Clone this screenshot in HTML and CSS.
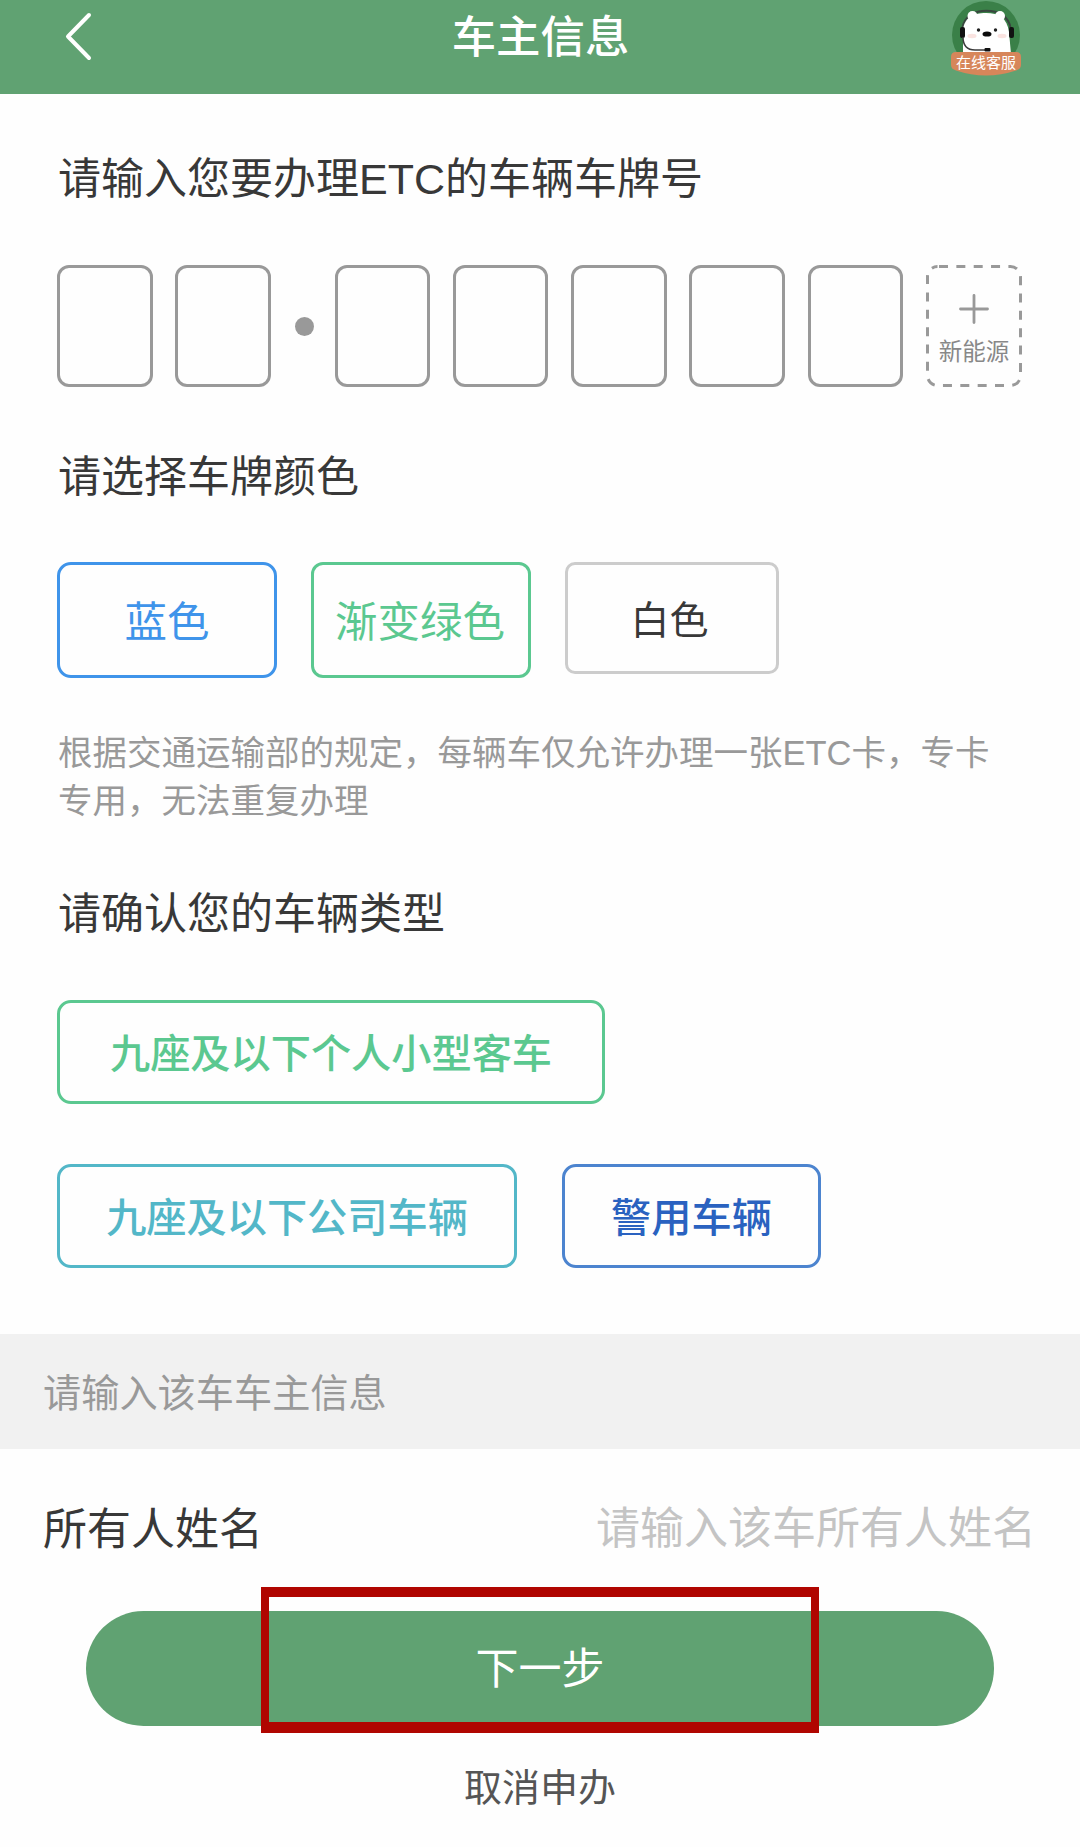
FILE: index.html
```html
<!DOCTYPE html>
<html lang="zh-CN">
<head>
  <meta charset="UTF-8">
  <meta name="viewport" content="width=device-width, initial-scale=1.0">
  <title>车主信息</title>
  <link rel="stylesheet" href="styles.css">
</head>
<body>
  <header class="header">
    <svg class="back" viewBox="0 0 32 52" width="32" height="52">
      <path d="M27 5 L6 26.500 L27 48" fill="none" stroke="#fff" stroke-width="4" stroke-linecap="round" stroke-linejoin="round"/>
    </svg>
    <h1 class="title">车主信息</h1>
    <div class="service">
      <svg class="bear" viewBox="0 0 70 76" width="70" height="76">
        <circle cx="35" cy="35" r="34" fill="#3a8048"/>
        <path d="M11.500 28 C14 5 57 5 59.500 28" fill="none" stroke="#39463f" stroke-width="2"/>
        <circle cx="21.500" cy="16" r="5" fill="#fff"/>
        <circle cx="49" cy="16" r="5" fill="#fff"/>
        <path d="M12 54 V32 C12 18 22 13 35 13 C48 13 56 18 58 32 L60 54 Z" fill="#fff"/>
        <rect x="9" y="27" width="5" height="11" rx="2" fill="#111"/>
        <rect x="58" y="27" width="5" height="11" rx="2" fill="#111"/>
        <path d="M12 37 C12 46 17 50 24 50 H36" fill="none" stroke="#3c3c3c" stroke-width="1.500"/>
        <rect x="33.500" y="48" width="6" height="3.500" rx="1" fill="#111"/>
        <circle cx="27.500" cy="30" r="1.700" fill="#222"/>
        <circle cx="44.500" cy="30" r="1.700" fill="#222"/>
        <ellipse cx="36" cy="34" rx="4.500" ry="2.600" fill="#0c0c0c"/>
        <ellipse cx="21" cy="36" rx="4.500" ry="2.200" fill="#fae3e0"/>
        <ellipse cx="51" cy="36" rx="4.500" ry="2.200" fill="#fae3e0"/>
        <path d="M5 52 H65 Q70 52 70 57 V65 Q70 69 65 70.500 Q35 80.500 5 70.500 Q0 69 0 65 V57 Q0 52 5 52 Z" fill="#d7865a"/>
      </svg>
      <span class="service-text">在线客服</span>
    </div>
  </header>

  <main class="form">
    <h2>请输入您要办理ETC的车辆车牌号</h2>
    <div class="plate">
      <span class="cell"></span>
      <span class="cell"></span>
      <span class="dot"></span>
      <span class="cell"></span>
      <span class="cell"></span>
      <span class="cell"></span>
      <span class="cell"></span>
      <span class="cell"></span>
      <span class="new-energy">
        <svg class="dash" viewBox="0 0 96 122" width="96" height="122">
          <rect x="1.500" y="1.500" width="93" height="119" rx="10" fill="none" stroke="#999" stroke-width="3" stroke-dasharray="9 8.350" stroke-dashoffset="-1.500"/>
        </svg>
        <svg class="plus" viewBox="0 0 30 30" width="30" height="30">
          <path d="M15 1.500 V28.500 M1.500 15 H28.500" stroke="#999" stroke-width="2.800" stroke-linecap="round"/>
        </svg>
        <span>新能源</span>
      </span>
    </div>

    <h2>请选择车牌颜色</h2>
    <div class="colors">
      <button class="color blue">蓝色</button>
      <button class="color green">渐变绿色</button>
      <button class="color white">白色</button>
    </div>
    <p class="note">根据交通运输部的规定，每辆车仅允许办理一张ETC卡，专卡<br>专用，无法重复办理</p>

    <h2>请确认您的车辆类型</h2>
    <div class="types">
      <button class="type personal">九座及以下个人小型客车</button>
      <button class="type company">九座及以下公司车辆</button>
      <button class="type police">警用车辆</button>
    </div>
  </main>

  <div class="band">请输入该车车主信息</div>

  <div class="owner">
    <label class="owner-label" for="owner">所有人姓名</label>
    <input class="owner-input" id="owner" type="text" placeholder="请输入该车所有人姓名">
  </div>

  <div class="actions">
    <button class="next">下一步</button>
    <span class="highlight"></span>
    <a class="cancel">取消申办</a>
  </div>
</body>
</html>
```
FILE: styles.css
```css
* {
  box-sizing: border-box;
}
body {
  margin: 0;
  width: 1080px;
  height: 1847px;
  overflow: hidden;
  background: #fefefe;
  color: #383838;
  font-family: "Liberation Sans", "Noto Sans CJK SC", sans-serif;
}
button,
input {
  font-family: inherit;
  padding: 0;
  background: none;
  border: none;
}
.header {
  display: flex;
  justify-content: space-between;
  align-items: flex-start;
  height: 94px;
  padding: 0 59px 0 62px;
  background: #60a272;
  color: #fff;
}
.back {
  margin: 10px 36px 0 0;
}
.title {
  margin: 7px 0 0;
  font-size: 44.4px;
  line-height: 62px;
  font-weight: 500;
}
.service {
  position: relative;
  width: 70px;
  height: 76px;
}
.service-text {
  position: absolute;
  left: 0;
  top: 53px;
  width: 70px;
  font-size: 15px;
  line-height: 20px;
  text-align: center;
}
.form {
  padding: 55px 57px 66px;
}
h2 {
  margin: 0;
  padding-left: 1px;
  font-size: 43px;
  line-height: 60px;
  font-weight: 400;
}
.plate {
  display: flex;
  align-items: center;
  gap: 22.8px;
  height: 122px;
  margin: 56px 0 60px;
}
.cell {
  flex: none;
  width: 95.5px;
  height: 122px;
  border: 3px solid #999;
  border-radius: 12px;
}
.dot {
  flex: none;
  width: 19px;
  height: 19px;
  margin: 0 -1.8px 0 1px;
  border-radius: 50%;
  background: #999;
}
.new-energy {
  position: relative;
  flex: none;
  display: flex;
  flex-direction: column;
  align-items: center;
  width: 96px;
  height: 122px;
  padding-top: 29px;
  color: #888;
  font-size: 23.5px;
  line-height: 32px;
}
.new-energy .dash {
  position: absolute;
  left: 0;
  top: 0;
}
.new-energy .plus {
  margin-bottom: 12px;
}
.colors {
  display: flex;
  align-items: flex-start;
  gap: 34px;
  height: 116px;
  margin: 55px 0 51px;
}
.color {
  width: 220px;
  height: 116px;
  padding-bottom: 4px;
  border: 3px solid;
  border-radius: 14px;
  font-size: 42.5px;
}
.blue {
  color: #3f94ea;
}
.green {
  padding-right: 2px;
  color: #5bc890;
  border-radius: 12px;
}
.white {
  width: 214px;
  height: 112px;
  padding-right: 5px;
  padding-bottom: 2px;
  border-color: #ccc;
  border-radius: 10px;
  color: #383838;
  font-size: 39px;
}
.note {
  margin: 0 -20px 59px 0;
  padding-left: 1px;
  color: #999;
  font-size: 34.5px;
  line-height: 48px;
}
.types {
  display: flex;
  flex-wrap: wrap;
  gap: 60px 45px;
  margin-top: 56px;
}
.type {
  height: 104px;
  padding-bottom: 4px;
  border: 3px solid;
  border-radius: 14px;
  font-size: 40.2px;
  font-weight: 500;
}
.personal {
  width: 548px;
  margin-right: 300px;
  color: #5bc890;
}
.company {
  width: 460px;
  color: #53b7c8;
}
.police {
  width: 259px;
  color: #2a62c0;
  border-color: #4c84cf;
}
.band {
  height: 115px;
  padding-left: 43px;
  background: #f1f1f1;
  color: #999;
  font-size: 38.2px;
  line-height: 119px;
}
.owner {
  display: flex;
  justify-content: space-between;
  align-items: center;
  height: 162px;
  padding: 0 44px 0 43px;
  font-size: 44px;
}
.owner-label {
  line-height: 60px;
}
.owner-input {
  width: 600px;
  height: 70px;
  padding-bottom: 2px;
  font-size: 44px;
  text-align: right;
}
.owner-input::placeholder {
  color: #c4c4c4;
}
.actions {
  position: relative;
  display: flex;
  flex-direction: column;
  align-items: center;
}
.next {
  width: 908px;
  height: 115px;
  padding-bottom: 8px;
  border-radius: 58px;
  background: #60a272;
  color: #fff;
  font-size: 43px;
}
.highlight {
  position: absolute;
  left: 261px;
  top: -24px;
  width: 558px;
  height: 146px;
  border: 8px solid #b00500;
  border-width: 10px 8px 11px;
}
.cancel {
  margin-top: 36px;
  color: #555;
  font-size: 38px;
  line-height: 52px;
}
```
